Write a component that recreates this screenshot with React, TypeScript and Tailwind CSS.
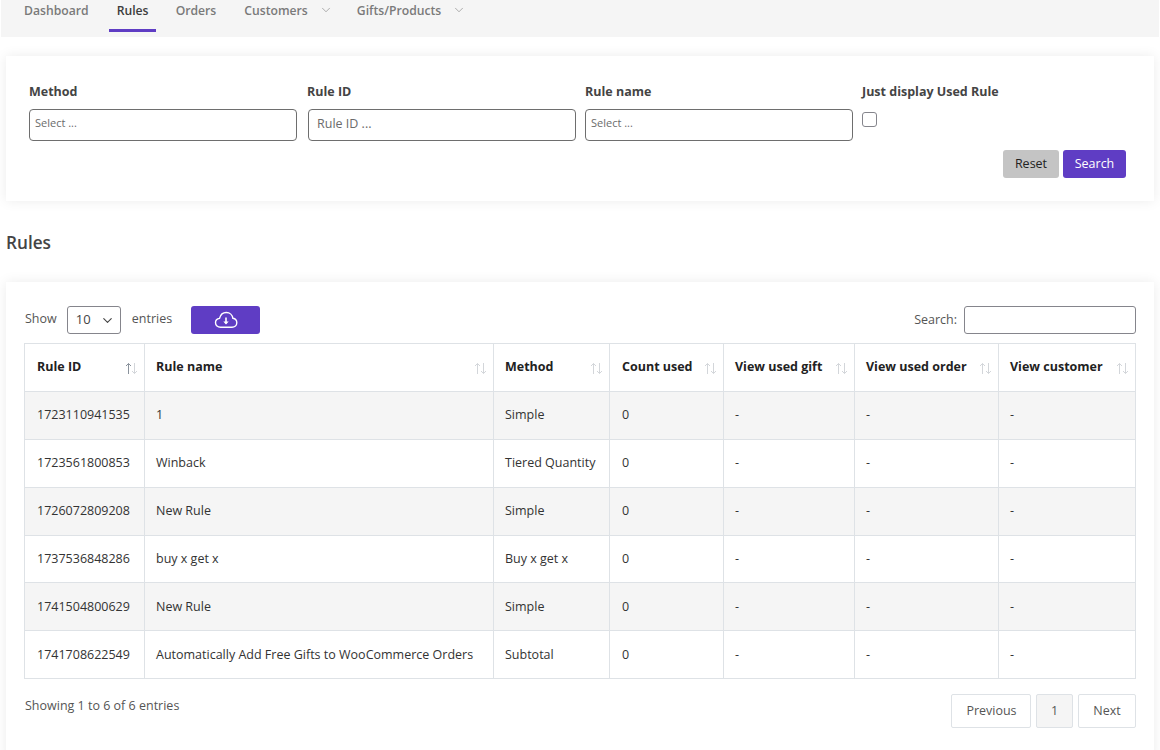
import React from 'react';
import { ChevronDown } from 'lucide-react';

const columns = [
  { label: 'Rule ID', width: 'w-[120px]', active: true },
  { label: 'Rule name', width: 'w-[349px]' },
  { label: 'Method', width: 'w-[116px]' },
  { label: 'Count used', width: 'w-[114px]' },
  { label: 'View used gift', width: 'w-[131px]' },
  { label: 'View used order', width: 'w-[144px]' },
  { label: 'View customer', width: 'w-[137px]' },
];

const rows = [
  ['1723110941535', '1', 'Simple', '0', '-', '-', '-'],
  ['1723561800853', 'Winback', 'Tiered Quantity', '0', '-', '-', '-'],
  ['1726072809208', 'New Rule', 'Simple', '0', '-', '-', '-'],
  ['1737536848286', 'buy x get x', 'Buy x get x', '0', '-', '-', '-'],
  ['1741504800629', 'New Rule', 'Simple', '0', '-', '-', '-'],
  ['1741708622549', 'Automatically Add Free Gifts to WooCommerce Orders', 'Subtotal', '0', '-', '-', '-'],
];

const SortArrows = ({ active }: { active?: boolean }) => (
  <svg width="13" height="13" viewBox="0 0 13 13" fill="none" className="absolute right-[6px] top-[18px]">
    <path d="M3.5 12V1.5M1 4l2.500-2.500L6 4" stroke={active ? '#8a929c' : '#d3d6da'} strokeWidth="1" />
    <path d="M9.500 1v10.500M7 9l2.500 2.500L12 9" stroke="#d3d6da" strokeWidth="1" />
  </svg>
);

const CloudDownload = () => (
  <svg width="24" height="18" viewBox="0 0 24 18" fill="none" stroke="#fff" strokeWidth="1.400">
    <path d="M6.500 16.300c-2.800 0-5-1.900-5-4.500 0-2.300 1.700-4.100 4-4.400C6.400 4 9 1.500 12.300 1.500c3.500 0 6.200 2.500 6.600 5.800 2.300.4 3.900 2.200 3.900 4.500 0 2.600-2.200 4.500-4.800 4.500z" />
    <path d="M12 6.500v6" strokeWidth="1.600" />
    <path d="M9.300 10.500h5.400L12 13.400z" fill="#fff" stroke="none" />
  </svg>
);

const NavItem = ({ label, active, caret, className = '' }: { label: string; active?: boolean; caret?: boolean; className?: string }) => (
  <div className={`h-[32px] px-[8px] flex items-start pt-[2px] gap-[11px] text-[12.200px] font-semibold border-b-[3px] ${active ? 'border-[#5f3dc4] text-[#3d3d3d]' : 'border-transparent text-[#7a7a7a]'} ${className}`}>
    <span>{label}</span>
    {caret && <ChevronDown size={14} strokeWidth={1} className="mt-[1px] text-[#777]" />}
  </div>
);

const FilterBox = ({ text, large }: { text: string; large?: boolean }) => (
  <div className={`w-[268px] h-[32px] border border-[#6e6e6e] rounded-[4px] bg-white ${large ? 'pl-[8px] pt-[5px] text-[12.500px] text-[#6b6b6b]' : 'pl-[5px] pt-[5px] text-[11px] text-[#6b6b6b]'}`}>
    {text}
  </div>
);

export default function App() {
  return (
    <div className="w-[1160px] h-[750px] overflow-hidden bg-white text-[#444] font-['Open_Sans',sans-serif]">
      <nav className="ml-[1px] mr-[1px] h-[37px] bg-[#f5f5f5] flex items-start pl-[15px] gap-[12px]">
        <NavItem label="Dashboard" />
        <NavItem label="Rules" active className="w-[47px]" />
        <NavItem label="Orders" />
        <NavItem label="Customers" caret />
        <NavItem label="Gifts/Products" caret className="ml-[-4px]" />
      </nav>

      <section className="mx-[6px] mt-[19px] h-[145px] bg-white shadow-[0_0_12px_rgba(0,0,0,0.08)] pl-[23px] pt-[28px]">
        <div className="flex">
          <div className="w-[278px]">
            <div className="text-[12.500px] font-bold leading-[16px] text-[#444] mb-[9px]">Method</div>
            <FilterBox text="Select ..." />
          </div>
          <div className="w-[278px]">
            <div className="text-[12.500px] font-bold leading-[16px] text-[#444] mb-[9px]">Rule ID</div>
            <div className="ml-[1px]">
              <FilterBox text="Rule ID ..." large />
            </div>
          </div>
          <div className="w-[277px]">
            <div className="text-[12.500px] font-bold leading-[16px] text-[#444] mb-[9px]">Rule name</div>
            <FilterBox text="Select ..." />
          </div>
          <div>
            <div className="text-[12.500px] font-bold leading-[16px] text-[#444] mb-[12px]">Just display Used Rule</div>
            <div className="w-[15px] h-[15px] border border-[#85858c] rounded-[3px] bg-white" />
          </div>
        </div>
        <div className="flex justify-end gap-[4px] pr-[28px] mt-[9px]">
          <button className="w-[56px] h-[28px] rounded-[3px] bg-[#c4c4c4] text-[#222] text-[12.500px]">Reset</button>
          <button className="w-[63px] h-[28px] rounded-[3px] bg-[#5f3dc4] text-white text-[12.500px]">Search</button>
        </div>
      </section>

      <h2 className="ml-[6px] mt-[30px] mb-[27px] text-[17.200px] leading-[24px] font-semibold text-[#444]">Rules</h2>

      <section className="mx-[6px] h-[480px] bg-white shadow-[0_0_12px_rgba(0,0,0,0.08)] px-[18px] pt-[24px]">
        <div className="flex items-center h-[28px] text-[12.500px] text-[#555]">
          <span className="ml-[1px] mb-[2px]">Show</span>
          <div className="ml-[10px] w-[54px] h-[28px] border border-[#85858c] rounded-[3px] flex items-center justify-between pl-[8px] pr-[5px] text-[#444] text-[13px]">
            <span>10</span>
            <ChevronDown size={15} strokeWidth={1.800} className="text-[#444]" />
          </div>
          <span className="ml-[11px] mb-[2px]">entries</span>
          <button className="ml-[19px] w-[69px] h-[28px] rounded-[3px] bg-[#5f3dc4] flex items-center justify-center">
            <CloudDownload />
          </button>
          <span className="ml-auto">Search:</span>
          <div className="ml-[7px] w-[172px] h-[28px] border border-[#85858c] rounded-[3px] bg-white" />
        </div>

        <table className="mt-[9px] w-[1111px] table-fixed border-collapse text-[12.500px] text-[#333]">
          <colgroup>
            {columns.map((c) => (
              <col key={c.label} className={c.width} />
            ))}
          </colgroup>
          <thead>
            <tr className="h-[48px]">
              {columns.map((c, j) => (
                <th key={c.label} className={`relative border border-[#dee2e6] pb-[1px] text-left font-bold text-[#222] whitespace-nowrap ${j === 0 || j === 3 ? 'pl-[12px]' : 'pl-[11px]'}`}>
                  {c.label}
                  <SortArrows active={c.active} />
                </th>
              ))}
            </tr>
          </thead>
          <tbody>
            {rows.map((row, i) => (
              <tr key={row[0]} className={`${i === 3 ? 'h-[47px]' : 'h-[48px]'} ${i % 2 === 0 ? 'bg-[#f5f5f5]' : 'bg-white'}`}>
                {row.map((cell, j) => (
                  <td key={j} className={`border border-[#dee2e6] whitespace-nowrap ${i < 3 ? 'pb-[1px]' : i > 3 ? 'pt-[1px]' : 'pb-0'} ${j === 0 || j === 3 ? 'pl-[12px]' : 'pl-[11px]'}`}>
                    {cell}
                  </td>
                ))}
              </tr>
            ))}
          </tbody>
        </table>

        <div className="flex items-start justify-between mt-[15px] text-[12.500px] text-[#555]">
          <span className="ml-[1px] mt-[3px]">Showing 1 to 6 of 6 entries</span>
          <div className="flex gap-[5px] text-[12.500px]">
            <div className="w-[80px] h-[34px] border border-[#dee2e6] rounded-[2px] flex items-center justify-center pl-[1px]">Previous</div>
            <div className="w-[37px] h-[34px] border border-[#dee2e6] rounded-[2px] bg-[#f5f5f5] flex items-center justify-center">1</div>
            <div className="w-[58px] h-[34px] border border-[#dee2e6] rounded-[2px] flex items-center justify-center">Next</div>
          </div>
        </div>
      </section>
    </div>
  );
}
